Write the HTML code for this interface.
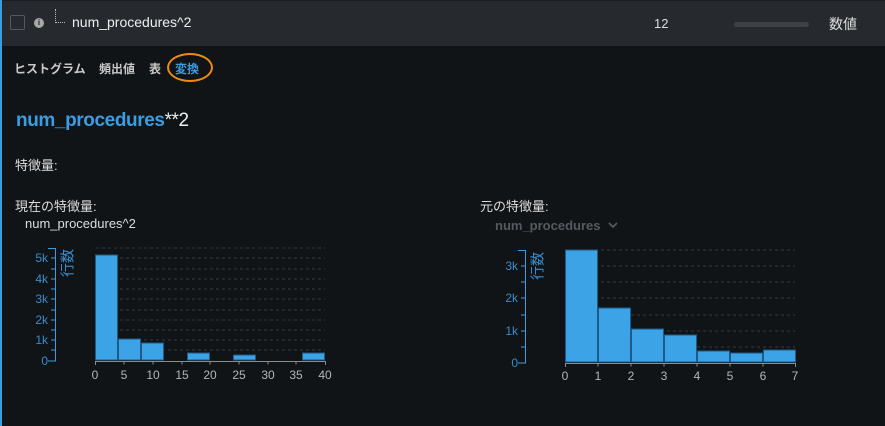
<!DOCTYPE html>
<html><head><meta charset="utf-8"><style>
*{margin:0;padding:0;box-sizing:border-box}
body{width:885px;height:426px;background:#111417;font-family:"Liberation Sans","Noto Sans CJK JP",sans-serif;position:relative;overflow:hidden;color:#e6e6e6}
.bl{position:absolute;left:0;top:0;width:2px;height:426px;background:#3b9de0}
.hd{position:absolute;left:2px;top:0;width:883px;height:46px;background:#262a2e;border-top:1px solid #1c1f22}
.a{position:absolute;white-space:nowrap}
</style></head><body>
<div class="hd"></div>
<div class="bl"></div>
<div class="a" style="left:10px;top:15px;width:15px;height:15px;border:1px solid #55595d;border-radius:2px"></div>
<div class="a" style="left:34px;top:18px;width:10px;height:10px;border-radius:50%;background:#a8a8a8;color:#262a2e;font-size:8px;font-weight:bold;text-align:center;line-height:10px">i</div>
<div class="a" style="left:55px;top:9px;width:10px;height:14px;border-left:1px dotted #bbb;border-bottom:1px dotted #bbb"></div>
<div class="a" style="left:72px;top:14px;font-size:14px;color:#eee">num_procedures^2</div>
<div class="a" style="left:654px;top:16px;font-size:13px;color:#ddd">12</div>
<div class="a" style="left:734px;top:22px;width:75px;height:5px;border-radius:3px;background:#3d4247"></div>
<div class="a" style="left:829px;top:14px;font-size:14px;color:#ddd">数値</div>
<div class="a" style="left:14px;top:60px;font-size:12px;color:#c8c8c8;font-weight:bold">ヒストグラム</div>
<div class="a" style="left:99px;top:60px;font-size:12px;color:#c8c8c8;font-weight:bold">頻出値</div>
<div class="a" style="left:149px;top:60px;font-size:12px;color:#c8c8c8;font-weight:bold">表</div>
<div class="a" style="left:175px;top:60px;font-size:12px;color:#3b9de0;font-weight:bold">変換</div>
<div class="a" style="left:167px;top:53px;width:46px;height:29px;border:2px solid #f08a10;border-radius:50%"></div>
<div class="a" style="left:16px;top:110px;font-size:19px;letter-spacing:-0.4px"><span style="color:#3b9de0;font-weight:bold">num_procedures</span><span style="color:#eee">**2</span></div>
<div class="a" style="left:15px;top:155px;font-size:13px;color:#ddd">特徴量:</div>
<div class="a" style="left:15px;top:196px;font-size:13px;color:#ddd">現在の特徴量:</div>
<div class="a" style="left:25px;top:216px;font-size:13px;color:#ddd">num_procedures^2</div>
<div class="a" style="left:480px;top:196px;font-size:13px;color:#ddd">元の特徴量:</div>
<div class="a" style="left:495px;top:218px;font-size:13px;color:#555a5f;font-weight:bold">num_procedures</div>
<svg class="a" style="left:0;top:0" width="885" height="426" font-family="Liberation Sans, Noto Sans CJK JP, sans-serif">
<path d="M609 223l4 4 4-4" stroke="#555a5f" stroke-width="1.8" fill="none"/>
<g stroke="#33383d" stroke-dasharray="3,3">
<line x1="96" x2="325" y1="248" y2="248"/><line x1="96" x2="325" y1="258" y2="258"/><line x1="96" x2="325" y1="269" y2="269"/><line x1="96" x2="325" y1="279" y2="279"/><line x1="96" x2="325" y1="289" y2="289"/><line x1="96" x2="325" y1="299" y2="299"/><line x1="96" x2="325" y1="310" y2="310"/><line x1="96" x2="325" y1="320" y2="320"/><line x1="96" x2="325" y1="330" y2="330"/><line x1="96" x2="325" y1="340" y2="340"/><line x1="96" x2="325" y1="350" y2="350"/>
<line x1="565" x2="795" y1="250" y2="250"/><line x1="565" x2="795" y1="266" y2="266"/><line x1="565" x2="795" y1="282" y2="282"/><line x1="565" x2="795" y1="298" y2="298"/><line x1="565" x2="795" y1="315" y2="315"/><line x1="565" x2="795" y1="331" y2="331"/><line x1="565" x2="795" y1="347" y2="347"/>
</g>
<g fill="#3ba3e6" stroke="#1d5a85" stroke-width="1">
<rect x="95.5" y="255" width="22" height="105"/><rect x="118.5" y="339" width="22" height="21"/><rect x="141.5" y="343" width="22" height="17"/><rect x="187.5" y="353" width="22" height="7"/><rect x="233.5" y="355" width="22" height="5"/><rect x="302.5" y="353" width="22" height="7"/>
<rect x="565.5" y="250" width="32" height="112"/><rect x="598.5" y="308" width="32" height="54"/><rect x="631.5" y="329" width="32" height="33"/><rect x="664.5" y="335" width="32" height="27"/><rect x="697.5" y="351" width="32" height="11"/><rect x="730.5" y="353" width="32" height="9"/><rect x="763.5" y="350" width="32" height="12"/>
</g>
<g stroke="#8a8d90" fill="none"><path d="M95.5 365V361.5H325.5V365"/><path d="M565.5 367V363.5H795.5V367"/>
<path d="M124 361.5v3M153 361.5v3M182 361.5v3M210 361.5v3M239 361.5v3M268 361.5v3M296 361.5v3M598 363.5v3M631 363.5v3M664 363.5v3M697 363.5v3M730 363.5v3M763 363.5v3"/></g>
<g fill="#b5b5b5" font-size="12" text-anchor="middle">
<text x="95" y="379">0</text><text x="124" y="379">5</text><text x="153" y="379">10</text><text x="182" y="379">15</text><text x="210" y="379">20</text><text x="239" y="379">25</text><text x="268" y="379">30</text><text x="296" y="379">35</text><text x="325" y="379">40</text>
<text x="565" y="380">0</text><text x="598" y="380">1</text><text x="631" y="380">2</text><text x="664" y="380">3</text><text x="697" y="380">4</text><text x="730" y="380">5</text><text x="763" y="380">6</text><text x="795" y="380">7</text>
</g>
<g stroke="#3b9de0" fill="none">
<path d="M48 248.5H55.5V361H48M51 258h4M51 269h4M51 279h4M51 289h4M51 299h4M51 310h4M51 320h4M51 330h4M51 340h4M51 350h4"/>
<path d="M518 250.5H525.5V363H518M521 266h4M521 282h4M521 298h4M521 315h4M521 331h4M521 347h4"/>
</g>
<g fill="#3b8ccc" font-size="12" text-anchor="end">
<text x="48" y="365">0</text><text x="48" y="344">1k</text><text x="48" y="324">2k</text><text x="48" y="303">3k</text><text x="48" y="283">4k</text><text x="48" y="262">5k</text>
<text x="518" y="367">0</text><text x="518" y="335">1k</text><text x="518" y="302">2k</text><text x="518" y="270">3k</text>
</g>
<text font-size="14" fill="#3b8ccc" transform="translate(69,249) rotate(-90)" text-anchor="end" dominant-baseline="middle">行数</text>
<text font-size="14" fill="#3b8ccc" transform="translate(539,252) rotate(-90)" text-anchor="end" dominant-baseline="middle">行数</text>
</svg>
</body></html>
